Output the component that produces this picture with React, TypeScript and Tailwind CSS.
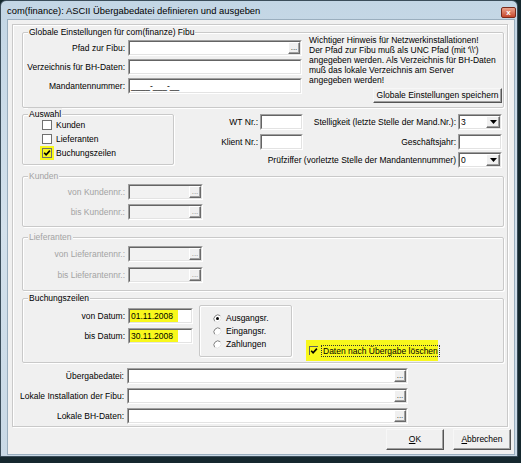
import React from 'react';

// classic 3D edges
const sunkenOuter = 'border border-t-[#a0a0a0] border-l-[#a0a0a0] border-r-white border-b-white';
const sunkenInner = 'border border-t-[#646464] border-l-[#646464] border-r-[#e3e3e3] border-b-[#e3e3e3]';
const raised =
    'border border-t-white border-l-white border-r-[#6a6a6a] border-b-[#6a6a6a] bg-[#f0f0f0] shadow-[inset_-1px_-1px_0_#a0a0a0]';
const etched = 'border border-[#c9c9c9] shadow-[inset_1px_1px_0_#fff,1px_1px_0_#fff]';

const DotsButton: React.FC<{ disabled?: boolean }> = ({ disabled }) => (
    <span
        className={`flex w-[12px] shrink-0 items-end justify-center pb-[1px] text-[8px] leading-[8px] ${raised} ${disabled ? 'text-[#8c8c8c]' : 'text-[#222]'}`}
    >
        ...
    </span>
);

interface FieldProps {
    w: string;
    value?: string;
    dots?: boolean;
    disabled?: boolean;
    mark?: boolean;
}

const Field: React.FC<FieldProps> = ({ w, value, dots, disabled, mark }) => (
    <div className={`flex h-[16px] shrink-0 ${sunkenOuter} ${w}`}>
        <div
            className={`flex min-w-0 flex-1 items-stretch ${sunkenInner} ${disabled ? 'bg-[#f2f2f2]' : 'bg-white'}`}
        >
            <span
                className={`flex items-center whitespace-nowrap pl-[1px] ${mark ? 'bg-[#f8f81c] pr-[5px]' : ''}`}
            >
                {value}
            </span>
            <span className="flex-1" />
            {dots && <DotsButton disabled={disabled} />}
        </div>
    </div>
);

const Combo: React.FC<{ value: string }> = ({ value }) => (
    <div className={`flex h-[16px] w-[44px] shrink-0 ${sunkenOuter}`}>
        <div className={`flex flex-1 items-stretch bg-white ${sunkenInner}`}>
            <span className="flex flex-1 items-center pl-[1px]">{value}</span>
            <span className={`flex w-[14px] items-center justify-center ${raised}`}>
                <svg width="7" height="4" viewBox="0 0 7 4">
                    <path d="M0 0h7L3.5 4z" fill="#000" />
                </svg>
            </span>
        </div>
    </div>
);

interface RowProps {
    label: string;
    disabled?: boolean;
    children: React.ReactNode;
}

const Row: React.FC<RowProps> = ({ label, disabled, children }) => (
    <div className="flex h-[16px] items-center">
        <div className="flex w-[105px] shrink-0 justify-end pr-[3px]">
            <span className={`whitespace-nowrap ${disabled ? 'text-[#a3a3a3]' : ''}`}>{label}</span>
        </div>
        {children}
    </div>
);

const Tick = () => (
    <svg width="8" height="8" viewBox="0 0 8 8">
        <path d="M1.2 3.8 L3.1 5.9 L6.9 1.6" stroke="#000" strokeWidth="1.6" fill="none" />
    </svg>
);

const Check: React.FC<{ label: string; checked?: boolean; mark?: boolean }> = ({ label, checked, mark }) => (
    <div className="flex h-[14px] items-center">
        <span
            className={`flex h-[10px] w-[10px] items-center justify-center border border-[#707070] ${mark ? 'bg-[#f8f81c] shadow-[0_0_0_2px_#f8f81c]' : 'bg-white'}`}
        >
            {checked && <Tick />}
        </span>
        <span className="ml-[4px]">{label}</span>
    </div>
);

const Radio: React.FC<{ label: string; on?: boolean }> = ({ label, on }) => (
    <div className="flex h-[13px] items-center">
        <svg width="9" height="9" viewBox="0 0 9 9">
            <circle cx="4.5" cy="4.5" r="4" fill="#fff" />
            <path d="M1.7 7.3 A4 4 0 0 1 7.3 1.7" stroke="#7c7c7c" fill="none" />
            <path d="M7.3 1.7 A4 4 0 0 1 1.7 7.3" stroke="#e0e0e0" fill="none" />
            {on && <circle cx="4.5" cy="4.5" r="1.5" fill="#000" />}
        </svg>
        <span className="ml-[4px]">{label}</span>
    </div>
);

interface GroupProps {
    title: string;
    disabled?: boolean;
    className?: string;
    children: React.ReactNode;
}

const Group: React.FC<GroupProps> = ({ title, disabled, className = '', children }) => (
    <div className={`relative shrink-0 rounded-[2px] ${etched} ${className}`}>
        <span
            className={`absolute -top-[7px] left-[5px] bg-[#f0f0f0] px-[1px] leading-[12px] ${disabled ? 'text-[#a3a3a3]' : ''}`}
        >
            {title}
        </span>
        {children}
    </div>
);

const DialogButton: React.FC<{ className?: string; children: React.ReactNode }> = ({ className = '', children }) => (
    <button
        className={`flex items-center justify-center border border-t-[#f7f7f7] border-l-[#f7f7f7] border-r-[#555] border-b-[#555] bg-[#f0f0f0] shadow-[inset_-1px_-1px_0_#a0a0a0] ${className}`}
    >
        {children}
    </button>
);

export default function App() {
    return (
        <div className="h-[463px] w-[521px] overflow-hidden bg-[#15282e] font-['Liberation_Sans',Arial,sans-serif] text-[8.5px] text-black">
            <div className="flex h-[457px] w-[518px] flex-col rounded-t-[6px] border border-[#3b4d5a] bg-gradient-to-b from-[#c3d6e5] via-[#d3e1ec] to-[#c9d9e6]">
                {/* Title bar */}
                <div className="flex h-[19px] shrink-0 items-start pl-[6px]">
                    <span className="pt-[4px] text-[9.4px] leading-[11px] text-black">
                        com(finance): ASCII Übergabedatei definieren und ausgeben
                    </span>
                    <span className="mt-[6px] mr-[1px] ml-auto flex h-[11px] w-[15px] items-center justify-center rounded-[2px] border border-[#7a2a1b] bg-gradient-to-b from-[#eaa28c] to-[#c5452a] text-[8px] leading-none font-bold text-white">
                        x
                    </span>
                </div>

                {/* Client area */}
                <div className="mr-[3px] mb-[2px] ml-[7px] flex flex-1 flex-col bg-[#f0f0f0] pt-[4px] pl-[4px] shadow-[0_0_0_1px_#9aaebe]">
                    <div className={`flex w-[496px] flex-col pt-[7px] pb-[2px] pl-[9px] ${etched}`}>
                        {/* Globale Einstellungen */}
                        <Group title="Globale Einstellungen für com(finanze) Fibu" className="flex h-[76px] w-[482px]">
                            <div className="flex flex-col gap-[3px] pt-[7px]">
                                <Row label="Pfad zur Fibu:">
                                    <Field w="w-[174px]" dots />
                                </Row>
                                <Row label="Verzeichnis für BH-Daten:">
                                    <Field w="w-[174px]" />
                                </Row>
                                <Row label="Mandantennummer:">
                                    <Field w="w-[174px]" value="____-___-__" />
                                </Row>
                            </div>
                            <div className="ml-[7px] flex flex-1 flex-col pt-[2px] pr-[1px]">
                                <p className="leading-[10px]">
                                    Wichtiger Hinweis für Netzwerkinstallationen!
                                    <br />
                                    Der Pfad zur Fibu muß als UNC Pfad (mit '\\')
                                    <br />
                                    angegeben werden. Als Verzeichnis für BH-Daten
                                    <br />
                                    muß das lokale Verzeichnis am Server
                                    <br />
                                    angegeben werden!
                                </p>
                                <DialogButton className="mt-[3px] h-[15px] w-[129px] self-end">
                                    Globale Einstellungen speichern
                                </DialogButton>
                            </div>
                        </Group>

                        {/* Auswahl + numbers */}
                        <div className="mt-[6px] flex h-[54px] w-[480px]">
                            <Group title="Auswahl" className="h-[51px] w-[152px] pt-[3px] pl-[19px]">
                                <Check label="Kunden" />
                                <Check label="Lieferanten" />
                                <Check label="Buchungszeilen" checked mark />
                            </Group>
                            <div className="flex flex-1 flex-col">
                                <div className="flex h-[16px] items-center">
                                    <div className="flex w-[129px] items-center justify-end">
                                        <span className="pr-[2px]">WT Nr.:</span>
                                        <Field w="w-[43px]" />
                                    </div>
                                    <div className="flex flex-1 items-center justify-end">
                                        <span className="pr-[2px] whitespace-nowrap">
                                            Stelligkeit (letzte Stelle der Mand.Nr.):
                                        </span>
                                        <Combo value="3" />
                                    </div>
                                </div>
                                <div className="mt-[4px] flex h-[16px] items-center">
                                    <div className="flex w-[129px] items-center justify-end">
                                        <span className="pr-[2px]">Klient Nr.:</span>
                                        <Field w="w-[43px]" />
                                    </div>
                                    <div className="flex flex-1 items-center justify-end">
                                        <span className="pr-[2px]">Geschäftsjahr:</span>
                                        <Field w="w-[44px]" />
                                    </div>
                                </div>
                                <div className="mt-[2px] flex h-[16px] items-center justify-end">
                                    <span className="pr-[2px] whitespace-nowrap">
                                        Prüfziffer (vorletzte Stelle der Mandantennummer)
                                    </span>
                                    <Combo value="0" />
                                </div>
                            </div>
                        </div>

                        {/* Kunden */}
                        <Group title="Kunden" disabled className="mt-[8px] flex h-[51px] w-[482px] flex-col gap-[4px] pt-[7px]">
                            <Row label="von Kundennr.:" disabled>
                                <Field w="w-[75px]" dots disabled />
                            </Row>
                            <Row label="bis Kundennr.:" disabled>
                                <Field w="w-[75px]" dots disabled />
                            </Row>
                        </Group>

                        {/* Lieferanten */}
                        <Group title="Lieferanten" disabled className="mt-[10px] flex h-[54px] w-[482px] flex-col gap-[5px] pt-[8px]">
                            <Row label="von Lieferantennr.:" disabled>
                                <Field w="w-[75px]" dots disabled />
                            </Row>
                            <Row label="bis Lieferantennr.:" disabled>
                                <Field w="w-[75px]" dots disabled />
                            </Row>
                        </Group>

                        {/* Buchungszeilen */}
                        <Group title="Buchungszeilen" className="mt-[7px] flex h-[65px] w-[482px] items-start">
                            <div className="flex flex-col gap-[4px] pt-[9px]">
                                <Row label="von Datum:">
                                    <Field w="w-[65px]" value="01.11.2008" mark />
                                </Row>
                                <Row label="bis Datum:">
                                    <Field w="w-[65px]" value="30.11.2008" mark />
                                </Row>
                            </div>
                            <div className={`mt-[6px] ml-[6px] h-[52px] w-[93px] rounded-[2px] pt-[6px] pl-[13px] ${etched}`}>
                                <Radio label="Ausgangsr." on />
                                <Radio label="Eingangsr." />
                                <Radio label="Zahlungen" />
                            </div>
                            <div className="mt-[41px] ml-[14px] flex h-[21px] w-[132px] items-center bg-[#f8f81c] pl-[3px]">
                                <span className="flex h-[9px] w-[9px] shrink-0 items-center justify-center border-t border-l border-[#606060]">
                                    <Tick />
                                </span>
                                <span className="ml-[3px] border border-dotted border-[#333] px-[1px] leading-[10px] whitespace-nowrap">
                                    Daten nach Übergabe löschen
                                </span>
                            </div>
                        </Group>

                        {/* Dateien */}
                        <div className="mt-[5px] flex flex-col gap-[4px]">
                            <Row label="Übergabedatei:">
                                <Field w="w-[281px]" dots />
                            </Row>
                            <Row label="Lokale Installation der Fibu:">
                                <Field w="w-[281px]" dots />
                            </Row>
                            <Row label="Lokale BH-Daten:">
                                <Field w="w-[281px]" dots />
                            </Row>
                        </div>
                    </div>

                    <div className="mt-[2px] flex justify-end gap-[9px] pr-[3px]">
                        <DialogButton className="h-[21px] w-[58px]">
                            <span className="underline">O</span>K
                        </DialogButton>
                        <DialogButton className="h-[21px] w-[58px]">
                            <span className="underline">A</span>bbrechen
                        </DialogButton>
                    </div>
                </div>
            </div>
        </div>
    );
}
